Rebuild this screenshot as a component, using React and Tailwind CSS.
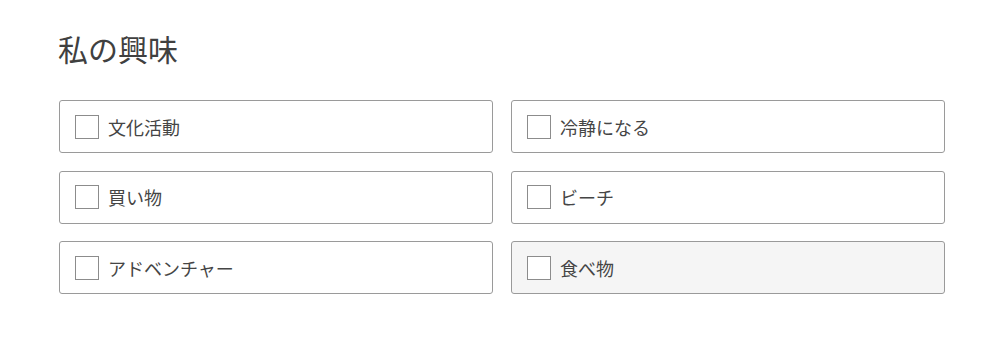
import React from 'react';

const interests = [
  { label: '文化活動', active: false },
  { label: '冷静になる', active: false },
  { label: '買い物', active: false },
  { label: 'ビーチ', active: false },
  { label: 'アドベンチャー', active: false },
  { label: '食べ物', active: true },
];

export default function App() {
  return (
    <div
      className="w-[1000px] h-[337px] bg-white pl-[59px] pr-[55px] pt-[28px] text-[#3c3c3c]"
      style={{ fontFamily: '"Noto Sans CJK JP", "Noto Sans", sans-serif' }}
    >
      <h2 className="text-[30px] leading-[40px] font-normal text-[#404040] -ml-[1px]">私の興味</h2>
      <div className="mt-[32px] grid grid-cols-2 gap-x-[18px] gap-y-[17.5px]">
        {interests.map((item) => (
          <label
            key={item.label}
            className={`flex h-[53px] items-center gap-[9px] rounded-[3px] border border-[#9a9a9a] pl-[15px] ${
              item.active ? 'bg-[#f5f5f5]' : 'bg-white'
            }`}
          >
            <span className="block h-[24px] w-[24px] border border-[#8c8c8c] bg-white" />
            <span className="text-[18px] leading-none text-[#454545]">{item.label}</span>
          </label>
        ))}
      </div>
    </div>
  );
}
